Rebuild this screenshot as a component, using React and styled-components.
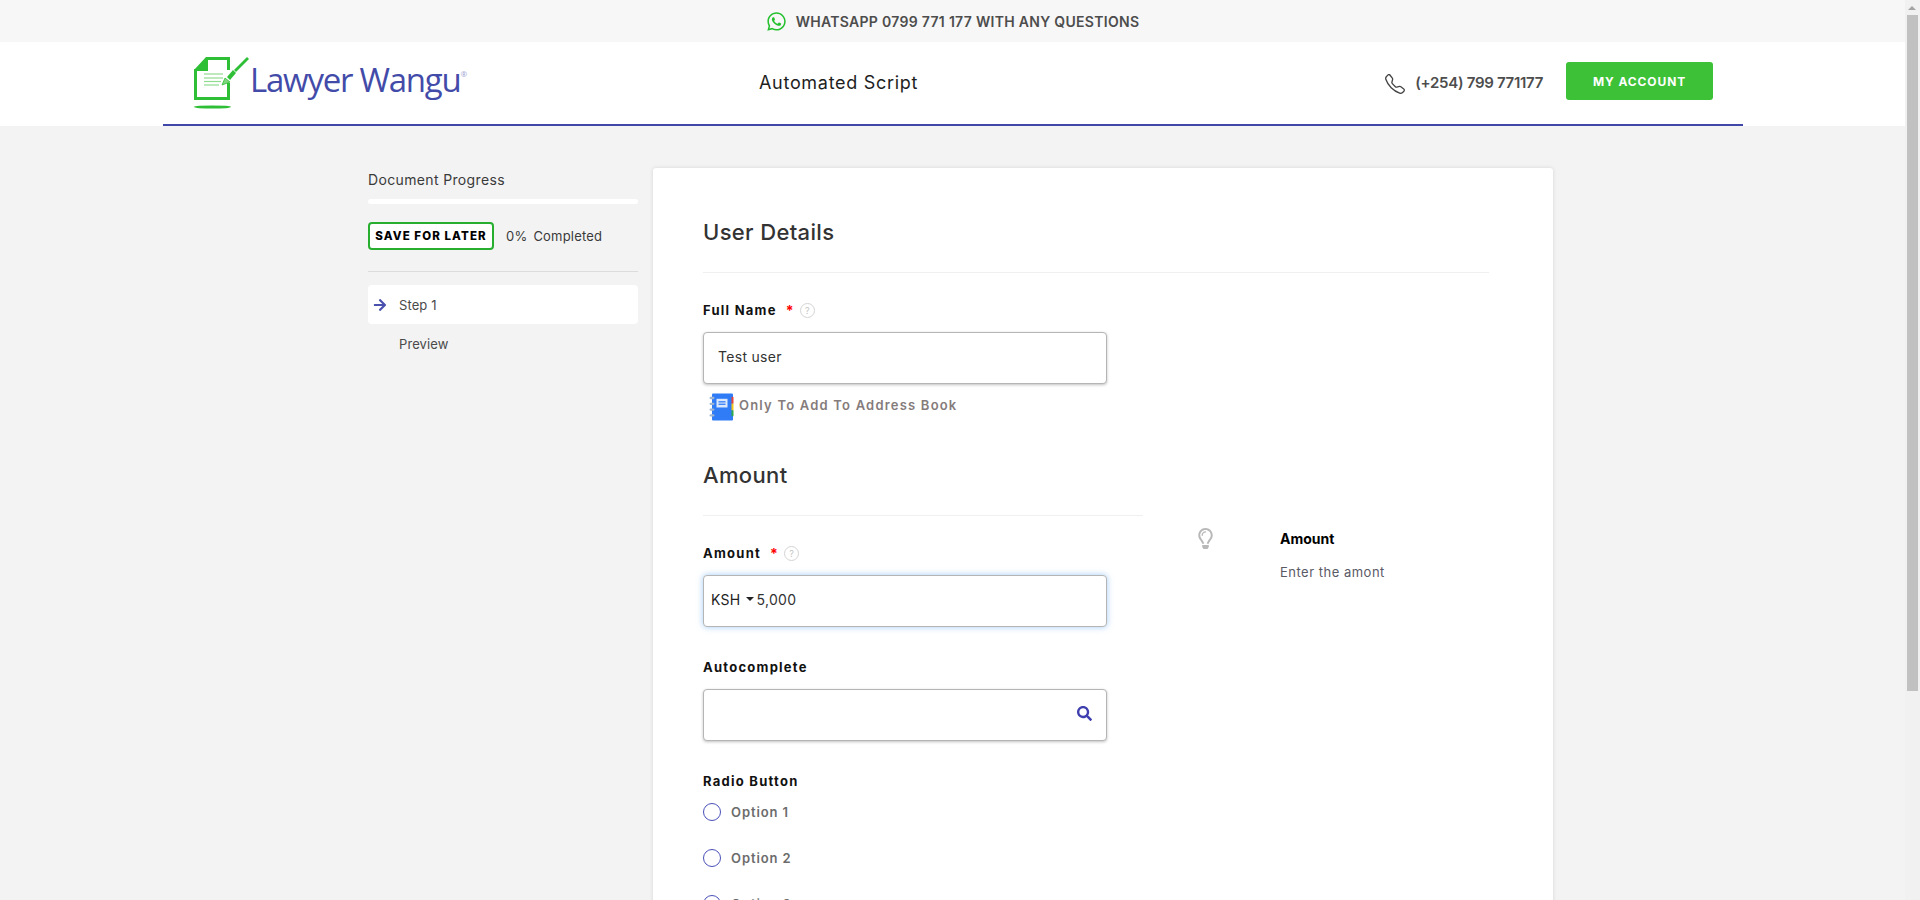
import React from "react";
import styled, { createGlobalStyle } from "styled-components";
import { FaWhatsapp, FaSearch, FaArrowRight, FaRegLightbulb } from "react-icons/fa";
import { BsTelephone } from "react-icons/bs";

const GlobalStyle = createGlobalStyle`
  body {
    margin: 0;
    background: #f3f3f3;
    font-family: Inter, "Open Sans", sans-serif;
    color: #3a3a3a;
  }
  * {
    box-sizing: border-box;
  }
`;

const ScrollTrack = styled.div`
  position: fixed;
  top: 0;
  right: 0;
  bottom: 0;
  width: 15px;
  background: #f1f1f1;
`;

const ScrollArrow = styled.div`
  position: absolute;
  top: 6px;
  left: 3px;
  width: 0;
  height: 0;
  border-left: 4px solid transparent;
  border-right: 4px solid transparent;
  border-bottom: 4px solid #a3a3a3;
`;

const ScrollThumb = styled.div`
  position: absolute;
  top: 15px;
  left: 2px;
  width: 11px;
  height: 676px;
  background: #c1c1c1;
`;

const TopBar = styled.div`
  height: 42px;
  padding-right: 15px;
  background: #f7f7f7;
  display: flex;
  align-items: center;
  justify-content: center;
  gap: 9px;
  font-size: 14px;
  font-weight: 600;
  letter-spacing: 0.3px;
  color: #4d4d4d;
  svg {
    color: #25c02f;
    font-size: 21px;
  }
`;

const HeaderBg = styled.div`
  background: #fff;
`;

const Header = styled.header`
  width: 1580px;
  height: 84px;
  margin-left: 163px;
  padding-bottom: 2px;
  border-bottom: 2px solid #3f48a8;
  display: flex;
  align-items: center;
`;

const Logo = styled.div`
  width: 596px;
  padding-left: 31px;
  display: flex;
  align-items: center;
`;

const LogoText = styled.span`
  font-family: "Open Sans", sans-serif;
  font-size: 33px;
  letter-spacing: -1.25px;
  color: #434ba9;
  margin-top: -5px;
  sup {
    font-size: 8px;
    color: #9da1d4;
    vertical-align: 15px;
    letter-spacing: 0;
  }
`;

const PageTitle = styled.div`
  font-size: 18px;
  color: #1e1e1e;
  letter-spacing: 0.7px;
`;

const HeaderRight = styled.div`
  margin-left: auto;
  margin-right: 30px;
  display: flex;
  align-items: center;
`;

const PhoneIcon = styled(BsTelephone)`
  font-size: 20px;
  color: #444;
  margin-right: 10px;
  margin-top: 3px;
`;

const PhoneNumber = styled.span`
  font-size: 15px;
  font-weight: 600;
  letter-spacing: -0.3px;
  color: #4d4d4d;
  margin-right: 23px;
`;

const AccountButton = styled.button`
  width: 147px;
  height: 38px;
  margin-bottom: 2px;
  border: none;
  border-radius: 3px;
  background: #3dc136;
  color: #fff;
  font-family: inherit;
  font-size: 12px;
  font-weight: 700;
  letter-spacing: 0.9px;
`;

const Main = styled.main`
  display: flex;
  align-items: flex-start;
  padding: 42px 0 60px 368px;
  gap: 15px;
`;

const Sidebar = styled.aside`
  width: 270px;
  padding-top: 3px;
`;

const ProgressTitle = styled.div`
  font-size: 14px;
  line-height: 17px;
  letter-spacing: 0.35px;
  color: #3a3a3a;
  margin-bottom: 11px;
`;

const ProgressTrack = styled.div`
  height: 5px;
  border-radius: 3px;
  background: #fff;
`;

const SaveRow = styled.div`
  display: flex;
  align-items: center;
  margin-top: 18px;
  padding-bottom: 21px;
  border-bottom: 1px solid #dcdcdc;
  font-size: 13px;
  letter-spacing: 0.2px;
`;

const SaveButton = styled.button`
  width: 126px;
  height: 28px;
  border: 2px solid #27ae2f;
  border-radius: 4px;
  background: #fff;
  color: #000;
  font-family: inherit;
  font-size: 11.5px;
  font-weight: 800;
  letter-spacing: 1.1px;
  padding: 0;
  margin-right: 12px;
`;

const Percent = styled.span`
  margin-right: 6px;
`;

const StepList = styled.div`
  margin-top: 13px;
`;

const Step = styled.div`
  height: 39px;
  display: flex;
  align-items: center;
  padding-left: 5px;
  border-radius: 4px;
  font-size: 13px;
  letter-spacing: 0.1px;
  color: #4a4a4a;
  background: ${(props) => (props.$active ? "#fff" : "transparent")};
`;

const StepMarker = styled.span`
  width: 26px;
  display: flex;
  color: #4a50ad;
  font-size: 14px;
`;

const Card = styled.section`
  width: 900px;
  background: #fff;
  border-radius: 3px;
  box-shadow: 0 0 4px rgba(0, 0, 0, 0.12);
  padding: 50px 64px 80px 50px;
`;

const SectionTitle = styled.h2`
  margin: 0;
  font-size: 22px;
  font-weight: 500;
  line-height: 28px;
  letter-spacing: 0.35px;
  color: #333;
  padding-bottom: 26px;
  border-bottom: 1px solid #f0f0f0;
`;

const FieldLabel = styled.div`
  display: flex;
  align-items: center;
  height: 20px;
  padding-bottom: 2px;
  font-size: 13px;
  font-weight: 650;
  letter-spacing: 1.25px;
  color: #111;
  margin-top: ${(props) => props.$top || "28px"};
`;

const Required = styled.span`
  color: #f00;
  margin-left: 9px;
  font-size: 14px;
`;

const HelpIcon = styled.span`
  width: 15px;
  height: 15px;
  margin-left: 5px;
  border: 1px solid #d4d4d4;
  border-radius: 50%;
  color: #c4c4c4;
  font-size: 9px;
  font-weight: 400;
  letter-spacing: 0;
  display: flex;
  align-items: center;
  justify-content: center;
`;

const InputBox = styled.div`
  width: 404px;
  height: 52px;
  margin-top: 11px;
  display: flex;
  align-items: center;
  justify-content: space-between;
  padding: 0 14px 4px;
  background: #fff;
  border: 1px solid #b5b5b5;
  border-radius: 4px;
  box-shadow: ${(props) =>
    props.$focused
      ? "0 0 6px rgba(80, 160, 240, 0.55)"
      : "0 1px 3px rgba(0, 0, 0, 0.25)"};
  font-size: 14px;
  letter-spacing: 0.3px;
  color: #333;
`;

const AmountInner = styled.div`
  display: flex;
  align-items: center;
  margin-left: -7px;
`;

const Currency = styled.span`
  color: #222;
`;

const Caret = styled.span`
  width: 0;
  height: 0;
  margin: 0 3px 0 5px;
  border-left: 4px solid transparent;
  border-right: 4px solid transparent;
  border-top: 4px solid #222;
`;

const SearchIcon = styled(FaSearch)`
  color: #3f3fb0;
  font-size: 15px;
`;

const AddressRow = styled.div`
  display: flex;
  align-items: center;
  gap: 5px;
  margin: 5px 0 0 6px;
  font-size: 13px;
  font-weight: 600;
  letter-spacing: 1.2px;
  color: #857b7b;
  svg {
    margin-top: 4px;
  }
`;

const AmountRow = styled.div`
  display: flex;
  margin-top: 40px;
`;

const AmountFields = styled.div`
  width: 440px;
`;

const HintIcon = styled(FaRegLightbulb)`
  font-size: 21px;
  color: #b8b8b8;
  margin: 67px 0 0 52px;
  flex: none;
`;

const Hint = styled.div`
  margin: 69px 0 0 64px;
`;

const HintTitle = styled.div`
  font-size: 14px;
  font-weight: 700;
  color: #000;
  margin-bottom: 17px;
`;

const HintText = styled.div`
  font-size: 13px;
  letter-spacing: 0.5px;
  color: #5a5a66;
`;

const RadioOption = styled.div`
  display: flex;
  align-items: center;
  height: 18px;
  margin-top: ${(props) => props.$top || "28px"};
  font-size: 13px;
  font-weight: 600;
  letter-spacing: 0.9px;
  color: #6c6c6c;
`;

const RadioCircle = styled.span`
  width: 18px;
  height: 18px;
  margin-right: 10px;
  border: 1px solid #4a50b8;
  border-radius: 50%;
`;

function AddressBookIcon() {
  return (
    <svg width="25" height="28" viewBox="0 0 25 29" preserveAspectRatio="none">
      <rect x="3" y="0.5" width="21" height="28" rx="1" fill="#2f7cf6" />
      <rect x="22.5" y="4" width="2" height="7" fill="#e8443a" />
      <rect x="22.5" y="11" width="2" height="7" fill="#f5c518" />
      <rect x="22.5" y="18" width="2" height="6" fill="#2da84a" />
      <rect x="7.5" y="6" width="11" height="9" fill="#dbe7fb" />
      <rect x="9.5" y="8.5" width="7" height="1.3" fill="#2f7cf6" />
      <rect x="9.5" y="11" width="7" height="1.3" fill="#2f7cf6" />
      <g fill="#9fb4cf">
        <rect x="0.5" y="4" width="5" height="2.4" rx="1.2" />
        <rect x="0.5" y="10" width="5" height="2.4" rx="1.2" />
        <rect x="0.5" y="16" width="5" height="2.4" rx="1.2" />
        <rect x="0.5" y="22" width="5" height="2.4" rx="1.2" />
      </g>
    </svg>
  );
}

function LogoMark() {
  return (
    <svg width="56" height="54" viewBox="0 0 56 54">
      <path
        d="M34.5 3.5 V15 M34.5 28 V43.5 H1.5 V14"
        fill="none"
        stroke="#2fbf36"
        strokeWidth="3"
      />
      <path d="M0 15 L12 2 H36 V5 H14 V16 H0 Z" fill="#2fbf36" />
      <g stroke="#8fdc8f" strokeWidth="1.2">
        <path d="M10 19 H29" />
        <path d="M10 23 H29" />
        <path d="M10 26.5 H27" />
        <path d="M10 30 H25" />
      </g>
      <path d="M28 30 L31 23 L36 27 Z" fill="#7fd67f" stroke="#2fbf36" strokeWidth="0.8" />
      <path d="M33 22 L39 15 L42 18 L36 25 Z" fill="#2fbf36" />
      <path d="M40 15 L53 2 L55 4 L42 17 Z" fill="#2fbf36" />
      <ellipse cx="18.5" cy="52" rx="18.5" ry="1.6" fill="#2fbf36" />
    </svg>
  );
}

export default function App() {
  return (
    <>
      <GlobalStyle />
      <TopBar>
        <FaWhatsapp />
        WHATSAPP 0799 771 177 WITH ANY QUESTIONS
      </TopBar>
      <HeaderBg>
        <Header>
          <Logo>
            <LogoMark />
            <LogoText>
              Lawyer Wangu<sup>®</sup>
            </LogoText>
          </Logo>
          <PageTitle>Automated Script</PageTitle>
          <HeaderRight>
            <PhoneIcon />
            <PhoneNumber>(+254) 799 771177</PhoneNumber>
            <AccountButton>MY ACCOUNT</AccountButton>
          </HeaderRight>
        </Header>
      </HeaderBg>
      <Main>
        <Sidebar>
          <ProgressTitle>Document Progress</ProgressTitle>
          <ProgressTrack />
          <SaveRow>
            <SaveButton>SAVE FOR LATER</SaveButton>
            <Percent>0%</Percent> Completed
          </SaveRow>
          <StepList>
            <Step $active>
              <StepMarker>
                <FaArrowRight />
              </StepMarker>
              Step 1
            </Step>
            <Step>
              <StepMarker />
              Preview
            </Step>
          </StepList>
        </Sidebar>
        <Card>
          <SectionTitle>User Details</SectionTitle>
          <FieldLabel>
            Full Name <Required>*</Required>
            <HelpIcon>?</HelpIcon>
          </FieldLabel>
          <InputBox>Test user</InputBox>
          <AddressRow>
            <AddressBookIcon />
            Only To Add To Address Book
          </AddressRow>
          <AmountRow>
            <AmountFields>
              <SectionTitle>Amount</SectionTitle>
              <FieldLabel>
                Amount <Required>*</Required>
                <HelpIcon>?</HelpIcon>
              </FieldLabel>
              <InputBox $focused>
                <AmountInner>
                  <Currency>KSH</Currency>
                  <Caret />
                  5,000
                </AmountInner>
              </InputBox>
              <FieldLabel $top="31px">Autocomplete</FieldLabel>
              <InputBox>
                <span />
                <SearchIcon />
              </InputBox>
              <FieldLabel $top="31px">Radio Button</FieldLabel>
              <RadioOption $top="11px">
                <RadioCircle />
                Option 1
              </RadioOption>
              <RadioOption>
                <RadioCircle />
                Option 2
              </RadioOption>
              <RadioOption>
                <RadioCircle />
                Option 3
              </RadioOption>
            </AmountFields>
            <HintIcon />
            <Hint>
              <HintTitle>Amount</HintTitle>
              <HintText>Enter the amont</HintText>
            </Hint>
          </AmountRow>
        </Card>
      </Main>
      <ScrollTrack>
        <ScrollArrow />
        <ScrollThumb />
      </ScrollTrack>
    </>
  );
}
